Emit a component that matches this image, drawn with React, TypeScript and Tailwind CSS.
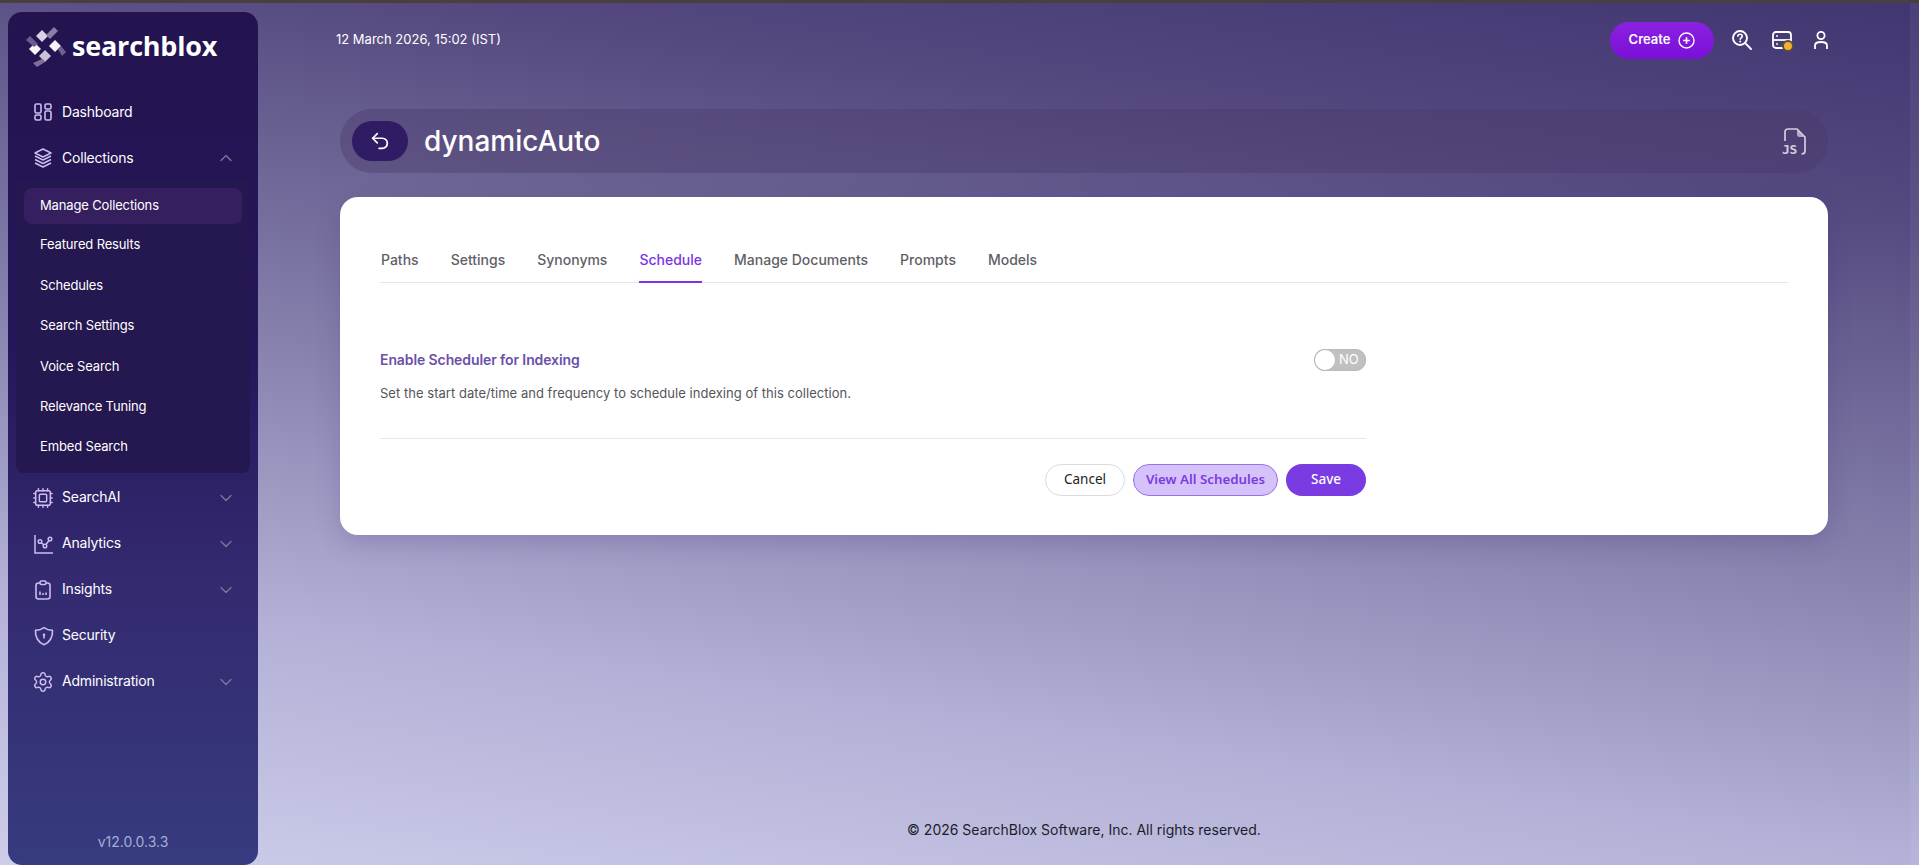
import React from "react";
import { ChevronDown, ChevronUp, Settings, Cpu, Undo2 } from "lucide-react";

const Logo = () => (
  <svg width="40" height="40" viewBox="0 0 40 40" className="mt-[2px] shrink-0">
    {/* top arm */}
    <path d="M16 3 L22 9 L16 15 L10 9 Z" fill="#d8d3e4" />
    <path d="M20 8 L28 0 L32 4 L24 12 Z" fill="#8a7da6" />
    {/* right arm */}
    <path d="M29 13 L35 19 L29 25 L23 19 Z" fill="#f4f2f8" />
    <path d="M32 22 L35 19 L40 25 L36 29 Z" fill="#6e6092" />
    {/* bottom arm */}
    <path d="M19 23 L25 29 L19 35 L13 29 Z" fill="#c9c3da" />
    <path d="M16 32 L19 35 L11 40 L7 36 Z" fill="#7d6f9a" />
    {/* left arm */}
    <path d="M9 16 L15 22 L9 28 L3 22 Z" fill="#f8f7fb" />
    <path d="M0 13 L4 9 L12 17 L8 20 Z" fill="#6a5c8e" />
  </svg>
);

const DashIcon = () => (
  <svg width="18" height="18" viewBox="0 0 18 18" fill="none" stroke="#cdbcf0" strokeWidth="1.6">
    <rect x="1" y="1" width="6" height="9" rx="1.5" />
    <rect x="11" y="1" width="6" height="5" rx="1.5" />
    <rect x="11" y="8" width="6" height="9" rx="1.5" />
    <rect x="1" y="12" width="6" height="5" rx="1.5" />
  </svg>
);

const StackIcon = () => (
  <svg width="18" height="20" viewBox="0 0 18 20" fill="none" stroke="#cdbcf0" strokeWidth="1.5" strokeLinejoin="round">
    <path d="M9 1 L17 5 L9 9 L1 5 Z" />
    <path d="M1 8 L9 12 L17 8" />
    <path d="M1 11.5 L9 15.5 L17 11.5" />
    <path d="M1 15 L9 19 L17 15" />
  </svg>
);

const ChartIcon = () => (
  <svg width="20" height="20" viewBox="0 0 20 20" fill="none" stroke="#cdbcf0" strokeWidth="1.5">
    <path d="M1 1 V19 H19" />
    <circle cx="6" cy="7.5" r="1.8" />
    <circle cx="11" cy="12" r="1.8" />
    <circle cx="16" cy="5" r="1.8" />
    <path d="M7.4 8.8 L9.7 10.8 M12 10.5 L15 6.5" />
  </svg>
);

const ClipIcon = () => (
  <svg width="18" height="20" viewBox="0 0 18 20" fill="none" stroke="#cdbcf0" strokeWidth="1.6">
    <rect x="2" y="3" width="14" height="16" rx="2.5" />
    <rect x="6" y="1" width="6" height="3.5" rx="1.5" fill="#2f2066" />
    <path d="M6 15 V11.5 M9 15 V13 M12 15 V12.5" />
  </svg>
);

const ShieldIcon = () => (
  <svg width="20" height="20" viewBox="0 0 20 20" fill="none" stroke="#cdbcf0" strokeWidth="1.6" strokeLinejoin="round">
    <path d="M10 1.5 C12.5 3.5 15.5 4.2 18.5 4.2 C19 10.5 16 16.5 10 18.8 C4 16.5 1 10.5 1.5 4.2 C4.5 4.2 7.5 3.5 10 1.5 Z" />
    <circle cx="10" cy="8.8" r="1.3" fill="#cdbcf0" stroke="none" />
    <path d="M10 9 V12.5" />
  </svg>
);

const HelpSearchIcon = () => (
  <svg width="20" height="20" viewBox="0 0 20 20" fill="none" stroke="#fff" strokeWidth="1.9" strokeLinecap="round">
    <circle cx="8" cy="8" r="7" />
    <path d="M13.2 13.2 L19 19" />
    <path d="M5.9 6.3 C6 3.6 10.2 3.7 10.2 6.2 C10.2 7.8 8.2 7.8 8.2 9.3" strokeWidth="1.6" />
    <circle cx="8.2" cy="11.6" r="1" fill="#fff" stroke="none" />
  </svg>
);

const ServerIcon = () => (
  <div className="relative h-[18px] w-5">
    <svg width="20" height="18" viewBox="0 0 20 18" fill="none" stroke="#fff" strokeWidth="1.8">
      <rect x="1" y="1" width="18" height="16" rx="3" />
      <path d="M1 9 H19" />
      <circle cx="5" cy="5" r="0.9" fill="#fff" stroke="none" />
      <circle cx="5" cy="13" r="0.9" fill="#fff" stroke="none" />
    </svg>
    <span className="absolute left-[10px] top-[9px] h-[12px] w-[12px] rounded-full border-2 border-[#5a4a3f] bg-[#f2b035]" />
  </div>
);

const UserIcon = () => (
  <svg width="14" height="19" viewBox="0 0 14 19" fill="none" stroke="#fff" strokeWidth="1.8">
    <circle cx="7" cy="4.5" r="3.6" />
    <path d="M1 18 V14.5 C1 12.5 3 11 7 11 C11 11 13 12.5 13 14.5 V18" />
  </svg>
);

const JsFileIcon = () => (
  <svg width="24" height="27" viewBox="0 0 24 27" fill="none" stroke="#d2cfdc" strokeWidth="1.7" className="overflow-visible">
    <path d="M3 13 V4 Q3 1 6 1 H15 L23 9 V23 Q23 26 19.5 26" />
    <path d="M15 1 L23 9 H17.5 Q15 9 15 7 Z" fill="#d2cfdc" stroke="none" opacity="0.75" />
    <text x="0" y="26" fontFamily="'DejaVu Sans Mono', monospace" fontSize="13" fontWeight="700" fill="#d2cfdc" stroke="none" letterSpacing="-0.3">JS</text>
  </svg>
);

const NavItem = ({ icon, label, chevron }: { icon: React.ReactNode; label: string; chevron?: "up" | "down" }) => (
  <div className="flex h-[46px] items-center pl-[26px] pr-[22px] text-[14px] tracking-[-0.2px] text-white">
    <span className="flex w-[28px] shrink-0 items-center">{icon}</span>
    <span className="flex-1 pb-[2px]">{label}</span>
    {chevron === "up" && <ChevronUp size={20} strokeWidth={1.5} className="text-[#7f7899]" />}
    {chevron === "down" && <ChevronDown size={20} strokeWidth={1.5} className="text-[#7f7899]" />}
  </div>
);

const subItems = ["Featured Results", "Schedules", "Search Settings", "Voice Search", "Relevance Tuning", "Embed Search"];
const tabs = ["Paths", "Settings", "Synonyms", "Schedule", "Manage Documents", "Prompts", "Models"];

const Sidebar = () => (
  <aside className="ml-2 mt-[9px] flex w-[250px] shrink-0 flex-col rounded-[14px] bg-[linear-gradient(180deg,#23134f_0%,#26175a_40%,#33296f_65%,#373b80_100%)]">
    <div className="flex h-[62px] items-center pl-[18px] pt-[5px]">
      <Logo />
      <span className="ml-[6px] font-['Open_Sans',sans-serif] text-[27px] font-bold leading-none tracking-[-0.2px] text-white">searchblox</span>
    </div>
    <div className="mt-[15px]">
      <NavItem icon={<DashIcon />} label="Dashboard" />
      <NavItem icon={<StackIcon />} label="Collections" chevron="up" />
    </div>
    <div className="mx-2 -mt-[1px] rounded-b-lg bg-[#25174f] px-2 pb-[5.5px] pt-2 text-[13px] tracking-[-0.15px] text-white">
      <div className="mb-[1px] flex h-9 items-center rounded-lg bg-[#351f5f] pl-4">Manage Collections</div>
      {subItems.map((s) => (
        <div key={s} className="flex h-[40.4px] items-center pl-4">{s}</div>
      ))}
    </div>
    <div className="mt-[2px]">
      <NavItem icon={<Cpu size={22} strokeWidth={1.6} color="#cdbcf0" className="-ml-[2px]" />} label="SearchAI" chevron="down" />
      <NavItem icon={<ChartIcon />} label="Analytics" chevron="down" />
      <NavItem icon={<ClipIcon />} label="Insights" chevron="down" />
      <NavItem icon={<ShieldIcon />} label="Security" />
      <NavItem icon={<Settings size={22} strokeWidth={1.6} color="#cdbcf0" className="-ml-[2px]" />} label="Administration" chevron="down" />
    </div>
    <div className="mt-auto pb-[13px] text-center text-[14px] text-[#a3aed6]">v12.0.0.3.3</div>
  </aside>
);

const App = () => {
  return (
    <div className="h-[865px] w-[1919px] overflow-hidden bg-[#4a3f3f] pt-[3px] font-['Inter',sans-serif]">
      <div className="flex h-[862px] bg-[linear-gradient(188deg,#423672_0%,#54487f_18%,#8581ac_50%,#b2b0d6_75%,#cdcdea_100%)]">
        <Sidebar />
        <main className="flex min-w-0 flex-1 flex-col pl-[82px] pr-[82px]">
          <div className="flex h-[76px] items-center justify-between pb-[2px]">
            <span className="-ml-[4px] text-[13px] text-white">12 March 2026, 15:02 (IST)</span>
            <div className="flex items-center">
              <button className="flex h-[37px] w-[104px] items-center justify-center gap-2 rounded-full bg-[linear-gradient(180deg,#8b21e0,#7a0fd8)] text-[13px] font-semibold text-white">
                Create
                <svg width="17" height="17" viewBox="0 0 17 17" fill="none" stroke="#fff" strokeWidth="1.4">
                  <circle cx="8.5" cy="8.5" r="7.5" />
                  <path d="M8.5 5.2 V11.8 M5.2 8.5 H11.8" strokeWidth="1.6" />
                </svg>
              </button>
              <div className="ml-[18px] flex items-center">
                <HelpSearchIcon />
                <span className="ml-5"><ServerIcon /></span>
                <span className="ml-[22px]"><UserIcon /></span>
              </div>
            </div>
          </div>

          <div className="mt-[30px] flex h-[64px] items-center justify-between rounded-full bg-[#4a3a6a66] pl-3 pr-[22px]">
            <div className="flex items-center">
              <button className="flex h-10 w-14 items-center justify-center rounded-full bg-[#2f1c64]">
                <Undo2 size={22} color="#fff" strokeWidth={1.9} />
              </button>
              <h1 className="ml-4 text-[28px] font-medium leading-none text-white">dynamicAuto</h1>
            </div>
            <JsFileIcon />
          </div>

          <section className="mt-6 h-[338px] rounded-[18px] bg-white px-10 pt-[52px] shadow-[0_8px_24px_rgba(60,40,110,0.2)]">
            <div className="flex gap-8 border-b border-[#e5e3ec] pl-[1px] text-[14px] font-medium text-[#5f5f66]">
              {tabs.map((t) =>
                t === "Schedule" ? (
                  <span key={t} className="-mb-[1px] h-[34px] border-b-2 border-[#7a35e4] leading-[22px] text-[#7a35e4]">{t}</span>
                ) : (
                  <span key={t} className="h-[33px] leading-[22px]">{t}</span>
                ),
              )}
            </div>

            <div className="w-[986px] border-b border-[#e8e6ee] pb-[34px] pt-[64px]">
              <div className="flex items-center justify-between">
                <span className="text-[14px] font-semibold tracking-[-0.1px] text-[#6a50a8]">Enable Scheduler for Indexing</span>
                <div className="mt-[2px] flex h-[22px] w-[52px] items-center rounded-full bg-[#c0c0c0] pl-[1px] shadow-[inset_0_0_1px_rgba(0,0,0,0.3)]">
                  <span className="h-5 w-5 rounded-full bg-white" />
                  <span className="ml-1 text-[13px] text-white">NO</span>
                </div>
              </div>
              <p className="mt-[13px] text-[13px] tracking-[0.03px] text-[#55555c]">Set the start date/time and frequency to schedule indexing of this collection.</p>
            </div>

            <div className="mt-[25px] flex w-[986px] justify-end gap-2 font-['Noto_Sans',sans-serif] text-[13.5px]">
              <button className="h-8 w-20 rounded-full border border-[#dcdcdc] bg-white text-[#222]">Cancel</button>
              <button className="h-8 w-[145px] rounded-full border border-[#9a70e8] bg-[#d6c2fa] text-[13.3px] font-semibold text-[#7a3be0]">View All Schedules</button>
              <button className="h-8 w-20 rounded-full bg-[#7a3be3] font-medium text-white">Save</button>
            </div>
          </section>

          <footer className="mt-auto pb-[25px] text-center text-[14px] text-[#1c1c2a]">© 2026 SearchBlox Software, Inc. All rights reserved.</footer>
        </main>
        <div className="w-[9px] shrink-0 bg-white/5" />
      </div>
    </div>
  );
};

export default App;
